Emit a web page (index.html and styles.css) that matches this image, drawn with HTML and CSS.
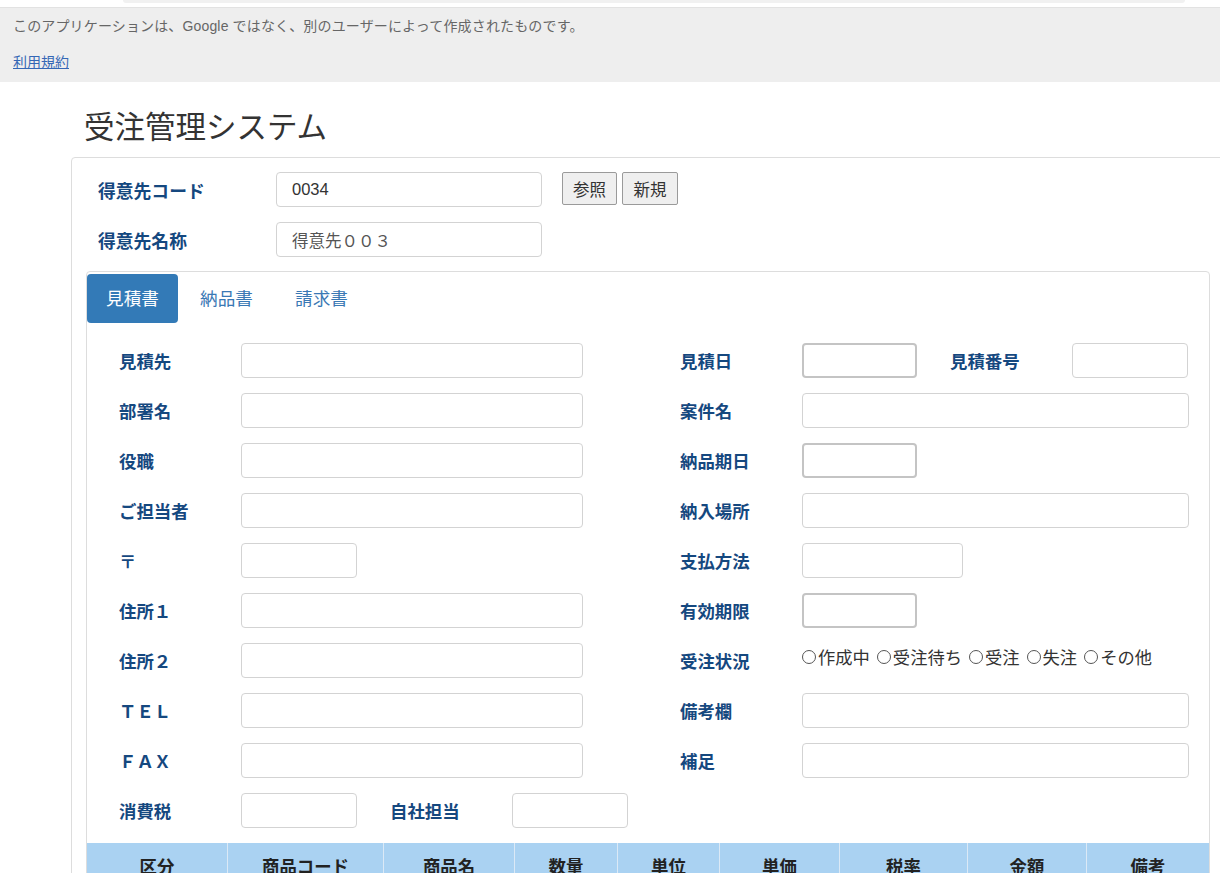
FILE: index.html
```html
<!DOCTYPE html>
<html lang="ja">
<head>
<meta charset="utf-8">
<title>受注管理システム</title>
<link rel="stylesheet" href="styles.css">
</head>
<body>
<div class="topstrip"><div class="topbar"></div></div>
<div class="banner">
  <p class="notice">このアプリケーションは、Google ではなく、別のユーザーによって作成されたものです。</p>
  <p class="terms"><a href="#">利用規約</a></p>
</div>
<div class="page">
  <h1 class="title">受注管理システム</h1>
  <div class="outer">
    <div class="crow">
      <label class="clabel">得意先コード</label>
      <input class="cinput" type="text" value="0034">
      <button class="btn first">参照</button>
      <button class="btn">新規</button>
    </div>
    <div class="crow">
      <label class="clabel">得意先名称</label>
      <input class="cinput name" type="text" value="得意先００３">
    </div>
    <div class="inner">
      <ul class="tabs">
        <li class="tab active">見積書</li>
        <li class="tab">納品書</li>
        <li class="tab">請求書</li>
      </ul>
      <div class="form">
        <div class="frow">
          <div class="lgroup"><span class="flabel">見積先</span><input class="in wl" type="text"></div>
          <div class="rgroup"><span class="flabel">見積日</span><input class="in wd date" type="text"><span class="flabel gapl">見積番号</span><input class="in wn" type="text"></div>
        </div>
        <div class="frow">
          <div class="lgroup"><span class="flabel">部署名</span><input class="in wl" type="text"></div>
          <div class="rgroup"><span class="flabel">案件名</span><input class="in wr" type="text"></div>
        </div>
        <div class="frow">
          <div class="lgroup"><span class="flabel">役職</span><input class="in wl" type="text"></div>
          <div class="rgroup"><span class="flabel">納品期日</span><input class="in wd date" type="text"></div>
        </div>
        <div class="frow">
          <div class="lgroup"><span class="flabel">ご担当者</span><input class="in wl" type="text"></div>
          <div class="rgroup"><span class="flabel">納入場所</span><input class="in wr" type="text"></div>
        </div>
        <div class="frow">
          <div class="lgroup"><span class="flabel">〒</span><input class="in ws" type="text"></div>
          <div class="rgroup"><span class="flabel">支払方法</span><input class="in wp" type="text"></div>
        </div>
        <div class="frow">
          <div class="lgroup"><span class="flabel">住所１</span><input class="in wl" type="text"></div>
          <div class="rgroup"><span class="flabel">有効期限</span><input class="in wd date" type="text"></div>
        </div>
        <div class="frow">
          <div class="lgroup"><span class="flabel">住所２</span><input class="in wl" type="text"></div>
          <div class="rgroup"><span class="flabel">受注状況</span>
            <div class="radios">
              <label class="radio"><input type="radio" name="st">作成中</label>
              <label class="radio"><input type="radio" name="st">受注待ち</label>
              <label class="radio"><input type="radio" name="st">受注</label>
              <label class="radio"><input type="radio" name="st">失注</label>
              <label class="radio"><input type="radio" name="st">その他</label>
            </div>
          </div>
        </div>
        <div class="frow">
          <div class="lgroup"><span class="flabel">ＴＥＬ</span><input class="in wl" type="text"></div>
          <div class="rgroup"><span class="flabel">備考欄</span><input class="in wr" type="text"></div>
        </div>
        <div class="frow">
          <div class="lgroup"><span class="flabel">ＦＡＸ</span><input class="in wl" type="text"></div>
          <div class="rgroup"><span class="flabel">補足</span><input class="in wr" type="text"></div>
        </div>
        <div class="frow">
          <div class="lgroup"><span class="flabel">消費税</span><input class="in ws" type="text"><span class="flabel gapl">自社担当</span><input class="in wn" type="text"></div>
        </div>
      </div>
      <table class="items">
        <thead>
          <tr>
            <th class="c1">区分</th>
            <th class="c2">商品コード</th>
            <th class="c3">商品名</th>
            <th class="c4">数量</th>
            <th class="c5">単位</th>
            <th class="c6">単価</th>
            <th class="c7">税率</th>
            <th class="c8">金額</th>
            <th class="c9">備考</th>
          </tr>
        </thead>
      </table>
    </div>
  </div>
</div>
</body>
</html>
```
FILE: styles.css
```css
html, body {
  margin: 0;
  padding: 0;
  overflow: hidden;
  background: #ffffff;
}
body {
  font-family: "Liberation Sans", "Noto Sans CJK JP", sans-serif;
  color: #333333;
  width: 1220px;
  height: 873px;
}
.topstrip {
  height: 7px;
  background: #ffffff;
}
.topbar {
  margin-left: 123px;
  width: 1062px;
  height: 3px;
  background: #f1f1f1;
  border-radius: 0 0 6px 6px;
}
.banner {
  background: #eeeeee;
  border-top: 1px solid #e2e2e2;
  padding: 8px 13px 10px;
  height: 56px;
}
.banner p {
  margin: 0;
  font-size: 14px;
  line-height: 20px;
}
.notice {
  color: #666666;
  letter-spacing: 0.15px;
}
.terms {
  margin-top: 16px !important;
}
.terms a {
  color: #3567b5;
  text-decoration: underline;
}
.page {
  padding-left: 71px;
}
.title {
  margin: 25px 0 14px 13px;
  font-family: "Noto Sans CJK JP", sans-serif;
  font-weight: 400;
  font-size: 30.5px;
  line-height: 36px;
  color: #333333;
}
.outer {
  width: 1124px;
  border: 1px solid #dddddd;
  border-radius: 4px;
  padding: 14px 14px 0 14px;
  height: 720px;
}
.crow {
  display: flex;
  align-items: center;
  height: 35px;
  padding-left: 12px;
  margin-bottom: 15px;
}
.crow:nth-child(2) {
  margin-bottom: 14px;
}
.clabel {
  width: 178px;
  font-family: "Noto Sans CJK JP", sans-serif;
  font-weight: 700;
  font-size: 17.8px;
  color: #15487f;
}
.cinput {
  box-sizing: border-box;
  width: 266px;
  height: 35px;
  border: 1px solid #d3d3d3;
  border-radius: 4px;
  padding: 0 15px;
  font-family: "Liberation Sans", "Noto Sans CJK JP", sans-serif;
  font-size: 16.5px;
  color: #333333;
}
.cinput.name {
  color: #555555;
  font-family: "Noto Sans CJK JP", sans-serif;
}
.btn {
  box-sizing: border-box;
  height: 33px;
  width: 56px;
  margin-left: 5px;
  margin-top: -2px;
  background: #efefef;
  border: 1px solid #9a9a9a;
  border-radius: 2px;
  font-family: "Noto Sans CJK JP", sans-serif;
  font-size: 16.5px;
  color: #333333;
  padding: 0;
}
.btn.first {
  margin-left: 20px;
  width: 55px;
}
.inner {
  border: 1px solid #dddddd;
  border-radius: 4px;
  padding: 2px 0 0 0;
  height: 700px;
}
.tabs {
  list-style: none;
  margin: 0;
  padding: 0;
  display: flex;
  gap: 2px;
}
.tab {
  padding: 11px 0 13px;
  width: 91px;
  line-height: 25px;
  font-family: "Noto Sans CJK JP", sans-serif;
  font-size: 17.6px;
  color: #3a78b4;
  border-radius: 4px;
  text-align: center;
}
.tab + .tab {
  width: 93px;
}
.tab.active {
  background: #337ab7;
  color: #ffffff;
}
.form {
  margin-top: 20px;
  padding-left: 32px;
}
.frow {
  display: flex;
  align-items: center;
  height: 35px;
  margin-bottom: 15px;
}
.lgroup {
  display: flex;
  align-items: center;
  width: 463px;
  margin-right: 98px;
}
.rgroup {
  display: flex;
  align-items: center;
}
.flabel {
  width: 122px;
  flex: none;
  font-family: "Noto Sans CJK JP", sans-serif;
  font-weight: 700;
  font-size: 17.4px;
  line-height: 24px;
  color: #15487f;
  padding-top: 1px;
}
.flabel.gapl {
  margin-left: 33px;
}
.in {
  box-sizing: border-box;
  height: 35px;
  border: 1px solid #d3d3d3;
  border-radius: 4px;
  padding: 0 12px;
  font-size: 16px;
  background: #ffffff;
  flex: none;
}
.in.date {
  border: 2px solid #c4c4c4;
  border-radius: 4px;
}
.wl { width: 342px; }
.wr { width: 387px; }
.wd { width: 115px; }
.wn { width: 116px; }
.ws { width: 116px; }
.wp { width: 161px; }
.radios {
  display: flex;
  gap: 7px;
  margin-top: -8px;
  font-family: "Noto Sans CJK JP", sans-serif;
  font-size: 17.3px;
  color: #333333;
  line-height: 24px;
}
.radio {
  display: flex;
  align-items: center;
}
.radio input {
  appearance: none;
  -webkit-appearance: none;
  width: 14px;
  height: 14px;
  border: 1px solid #555555;
  border-radius: 50%;
  margin: 0 2px 0 0;
  background: #ffffff;
}
.items {
  margin-top: 0;
  width: 1122px;
  border-collapse: collapse;
  table-layout: fixed;
}
.items th {
  background: #aad2f2;
  border-left: 1px solid #dbe9f6;
  border-right: 1px solid #dbe9f6;
  padding: 11px 0;
  line-height: 24px;
  font-family: "Noto Sans CJK JP", sans-serif;
  font-weight: 700;
  font-size: 17.4px;
  color: #222222;
  text-align: center;
}
.items th.c1 { width: 140px; border-left: none; }
.items th.c2 { width: 155px; }
.items th.c3 { width: 130px; }
.items th.c4 { width: 102px; }
.items th.c5 { width: 101px; }
.items th.c6 { width: 119px; }
.items th.c7 { width: 127px; }
.items th.c8 { width: 118px; }
.items th.c9 { border-right: none; }
```
